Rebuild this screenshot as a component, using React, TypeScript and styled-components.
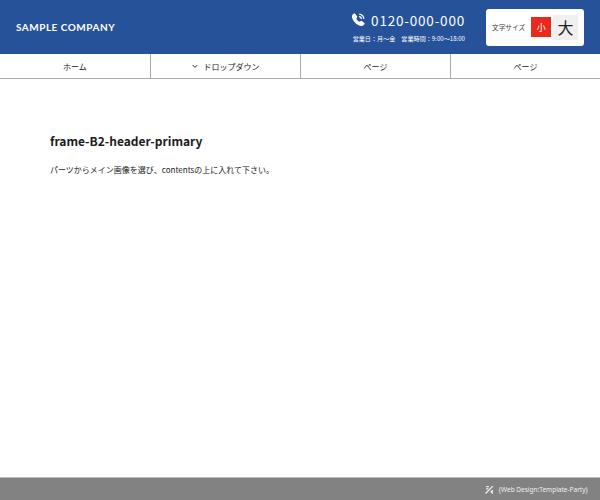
import React from "react";
import styled, { createGlobalStyle } from "styled-components";

const Global = createGlobalStyle`
  html, body { margin: 0; padding: 0; }
  body {
    width: 600px; height: 500px; overflow: hidden; background: #fff;
    font-family: "Noto Sans CJK JP", "Noto Sans", sans-serif; color: #222;
  }
`;
const Page = styled.div`
  width: 600px; height: 500px; display: flex; flex-direction: column; overflow: hidden;
`;
const Header = styled.header`
  height: 54px; flex: none; background: #265299; display: flex; align-items: center;
  box-sizing: border-box; padding: 0 16px;
`;
const Logo = styled.div`
  font-family: "Lato", "Noto Sans", sans-serif; font-size: 10px; font-weight: 700;
  letter-spacing: 0.5px; color: #fff; margin-right: auto;
`;
const Contact = styled.div`
  display: flex; flex-direction: column; align-items: flex-end; margin-right: 21px; margin-top: -1px;
`;
const Phone = styled.div`
  display: flex; align-items: center; gap: 5px; color: #fff; font-size: 13.5px; line-height: 20px;
  letter-spacing: 0.8px; font-weight: 400;
`;
const Hours = styled.div`
  color: #fff; font-size: 6.1px; line-height: 10px; margin-top: 4px; white-space: pre;
`;
const SizeBox = styled.div`
  width: 98px; height: 37px; background: #fff; border-radius: 3px; display: flex; align-items: center;
  box-sizing: border-box; padding: 0 6px;
`;
const SizeLabel = styled.span`
  font-size: 6.7px; color: #444; margin-right: 6px; white-space: nowrap;
`;
const SizeSmall = styled.span`
  width: 20px; height: 20px; background: #e8291c; color: #fff; font-size: 9px;
  display: flex; align-items: center; justify-content: center; margin-right: 2px;
`;
const SizeLarge = styled.span`
  width: 25px; height: 25px; background: #f0f0f0; color: #222; font-size: 16px;
  display: flex; align-items: center; justify-content: center;
`;
const Nav = styled.nav`
  height: 25px; flex: none; display: grid; grid-template-columns: repeat(4, 1fr);
  border-bottom: 1px solid #aaa; box-sizing: border-box;
`;
const NavItem = styled.a`
  display: flex; align-items: center; justify-content: center; gap: 6px; font-size: 8px; color: #222;
  border-left: 1px solid #aaa; &:first-child { border-left: 0; }
`;
const Main = styled.main`
  flex: 1; padding: 52px 50px 0;
`;
const Title = styled.h1`
  margin: 0; font-size: 12px; line-height: 20px; font-weight: 700; color: #1c1c1c;
`;
const Text = styled.p`
  margin: 10px 0 0; font-size: 8px; line-height: 18px; color: #222;
`;
const Footer = styled.footer`
  height: 23px; flex: none; background: #828282; border-top: 1px solid #bbb; box-sizing: border-box;
  display: flex; align-items: center; justify-content: flex-end; gap: 5px; padding-right: 12px;
  color: #eee; font-family: "Noto Sans", sans-serif; font-size: 6.5px;
`;

const PhoneIcon = () => (
  <svg width="15" height="15" viewBox="0 0 24 24" fill="none">
    <path d="M6 2 L10 7 C10.5 8 8.5 9.5 8.5 10.5 C9 12.5 11.5 15 13.5 15.5 C14.5 15.5 16 13.5 17 14 L22 18 C21.5 20.5 19 23 16 22.5 C9 21 3 15 1.5 8 C1 5 3.5 2.5 6 2 Z" fill="#fff"/>
    <path d="M13 7.5a3.5 3.5 0 0 1 3.5 3.5M13 3.5a7.5 7.5 0 0 1 7.5 7.5" stroke="#fff" strokeWidth="2"/>
  </svg>
);
const Chevron = () => (
  <svg width="6" height="5" viewBox="0 0 6 5" fill="none"><path d="M.7 1l2.3 2.4L5.3 1" stroke="#333" strokeWidth="1"/></svg>
);
const MarkIcon = () => (
  <svg width="9" height="9" viewBox="0 0 8 8" fill="none">
    <path d="M0.5 7.5L7 1M1 1.5h2.5M1 3.5h2M5 5.5l2 2M6.5 4.5v1.5" stroke="#eee" strokeWidth="1.2"/>
  </svg>
);

export default function App() {
  return (
    <Page>
      <Global />
      <Header>
        <Logo>SAMPLE COMPANY</Logo>
        <Contact>
          <Phone><PhoneIcon />0120-000-000</Phone>
          <Hours>営業日：月〜金　営業時間：9:00〜18:00</Hours>
        </Contact>
        <SizeBox>
          <SizeLabel>文字サイズ</SizeLabel>
          <SizeSmall>小</SizeSmall>
          <SizeLarge>大</SizeLarge>
        </SizeBox>
      </Header>
      <Nav>
        <NavItem>ホーム</NavItem>
        <NavItem><Chevron />ドロップダウン</NavItem>
        <NavItem>ページ</NavItem>
        <NavItem>ページ</NavItem>
      </Nav>
      <Main>
        <Title>frame-B2-header-primary</Title>
        <Text>パーツからメイン画像を選び、contentsの上に入れて下さい。</Text>
      </Main>
      <Footer><MarkIcon />{"{Web Design:Template-Party}"}</Footer>
    </Page>
  );
}
